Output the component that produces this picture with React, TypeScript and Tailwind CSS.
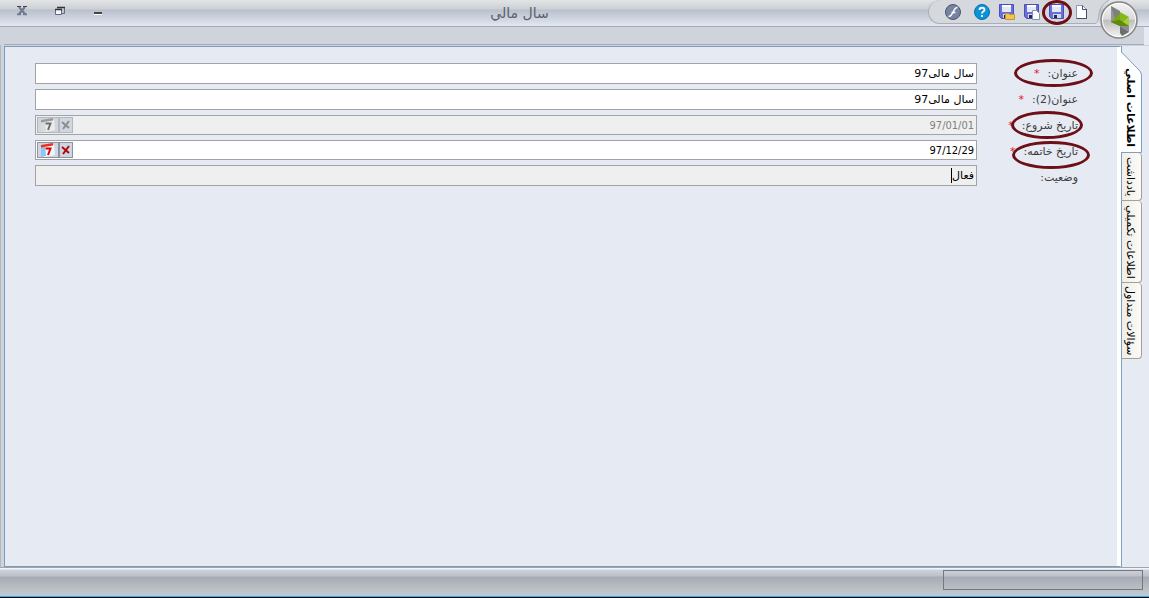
import type { ReactNode } from "react";

type Field = {
    id: string;
    label: string;
    value: string;
    required?: boolean;
    disabled?: boolean;
    readOnly?: boolean;
    picker?: boolean;
    height: string;
    mark?: string;
};

const fields: Field[] = [
    { id: "title", label: "عنوان:", value: "سال مالی97", required: true, height: "h-[21px]", mark: "-right-[15px] -top-[5px] w-[79px]" },
    { id: "title2", label: "عنوان(2):", value: "سال مالی97", required: true, height: "h-[21px]" },
    { id: "start", label: "تاریخ شروع:", value: "97/01/01", required: true, disabled: true, picker: true, height: "h-5", mark: "-right-[5px] -top-[5px] w-[72px]" },
    { id: "end", label: "تاریخ خاتمه:", value: "97/12/29", required: true, picker: true, height: "h-5", mark: "-right-3 -top-px w-[78px]" },
    { id: "status", label: "وضعیت:", value: "فعال", readOnly: true, height: "h-[21px]" },
];

const tabs = [
    { name: "يادداشت", height: "h-12" },
    { name: "اطلاعات تكميلي", height: "h-[82px]" },
    { name: "سؤالات متداول", height: "h-[76px]" },
];

const Floppy = ({ children }: { children?: ReactNode }) => (
    <svg viewBox="0 0 16 16" className="size-4">
        <path d="M.5.500h14v14h-12l-2-2z" fill="#6a6fd8" stroke="#4a4fbc" />
        <path d="M3 1h9v7H3z" fill="#dfe9f8" />
        <path d="M3 1h9v2H3z" fill="#fff" />
        <path d="M4 10h8v4H4z" fill="#d5d8e6" />
        <path d="M5 11h3v3H5z" fill="#23275e" />
        {children}
    </svg>
);

const Calendar = ({ off }: { off?: boolean }) => (
    <svg viewBox="0 0 18 14" className="h-[14px] w-[18px]">
        <path d="M3 3l12-1 1 10-10 2-4-1z" fill={off ? "#ececec" : "#eef7ff"} />
        <path d="M2 4h4l1 9-5 1z" fill={off ? "#dadada" : "#8fc6f3"} />
        <path d="M2 2l12-2v2.500L2 4.500z" fill={off ? "#999" : "#e8301c"} />
        <path d="M6.500 5.500h5l-2.500 6.500" fill="none" stroke={off ? "#6d6d6d" : "#e00000"} strokeWidth="2" />
    </svg>
);

const Cross = ({ off }: { off?: boolean }) => (
    <svg viewBox="0 0 10 10" className="size-[10px]">
        <path d="M1 2l7 6M8 1L2 9" stroke={off ? "#8c8c8c" : "#b00810"} strokeWidth="2" />
    </svg>
);

const Logo = () => (
    <svg viewBox="0 0 40 40" className="size-10">
        <defs>
            <linearGradient id="orb" x1="0" y1="0" x2="0" y2="1">
                <stop offset="0" stopColor="#f4f4f4" />
                <stop offset=".48" stopColor="#dadada" />
                <stop offset=".5" stopColor="#bdbdbd" />
                <stop offset="1" stopColor="#f6f6f6" />
            </linearGradient>
        </defs>
        <circle cx="20" cy="20" r="18" fill="url(#orb)" stroke="#858585" strokeWidth="1.5" />
        <circle cx="20" cy="20" r="16.5" fill="none" stroke="#fafafa" />
        <path d="M12 6l9 5v4l-9 7z" fill="#7d7f80" />
        <path d="M12 6v16l4-3z" fill="#949697" />
        <path d="M12 22l9-9v12z" fill="#7aa80f" />
        <path d="M12 22l9-2v6z" fill="#54790a" />
        <path d="M21 12l9 5-9 8z" fill="#86b81c" />
        <path d="M30 17v9l-9-1z" fill="#a6cf3c" />
        <path d="M12 22l9-2 9 6h-9z" fill="#5f8a0c" />
        <path d="M21 26h9v6z" fill="#8b8d8e" />
        <path d="M21 26l9 6-7 4-2-3z" fill="#6c6e70" />
    </svg>
);

const toolButton = "relative flex size-4 items-center justify-center";

const TitleBar = () => (
    <header dir="ltr" className="relative flex h-[27px] shrink-0 items-center border-b border-[#a6aab4] bg-[linear-gradient(#e2e4e6_0,#cdd0d4_9px,#b9c0cc_10px,#e2e7f1_26px)]">
        <div className="flex gap-5 pl-[13px] pb-1">
            <button aria-label="بستن" className="flex size-[18px] items-center justify-center">
                <svg viewBox="0 0 12 12" className="size-3">
                    <path d="M1 10.500h4M7 10.500h4" stroke="#fff" />
                    <path d="M3 2l6 7M9 2L3 9M1 9.500h4M7 9.500h4" stroke="#6c7a92" strokeWidth="2" />
                    <path d="M1 1.500h4M7 1.500h4" stroke="#444" />
                </svg>
            </button>
            <button aria-label="بازگرداندن" className="flex size-[18px] items-center justify-center">
                <svg viewBox="0 0 10 10" className="size-[10px]">
                    <path d="M2.500 2v-.5h7v6H7" fill="none" stroke="#5f6b80" />
                    <path d="M.5 3.500h6v5h-6z" fill="#f4f6fa" stroke="#5f6b80" />
                    <path d="M0 3.500h7M2 1.500h8" stroke="#333" strokeWidth="1.500" />
                </svg>
            </button>
            <button aria-label="کوچک کردن" className="flex size-[18px] items-center justify-center">
                <svg viewBox="0 0 10 10" className="size-[10px]">
                    <path d="M1 7h8" stroke="#444" strokeWidth="2" />
                    <path d="M1 8.500h8" stroke="#fff" />
                </svg>
            </button>
        </div>
        <h1 dir="rtl" className="absolute inset-x-0 top-1 pr-[110px] text-center text-sm leading-[18px] text-[#5a6070]">سال مالي</h1>
        <div className="absolute right-[54px] top-0 flex h-6 items-center gap-[9px] rounded-l-full border border-x-0 border-t-0 border-l border-[#aaaeb6] bg-[#d5d8dd] pl-4 pr-[5px]">
            <button aria-label="اجرا" className={`${toolButton} mr-1`}>
                <svg viewBox="0 0 16 16" className="size-4">
                    <circle cx="8" cy="8" r="7.500" fill="#7583a0" stroke="#4a566e" />
                    <path d="M12.500 3.500C8 3 8.500 12.500 3.500 12.500M6.500 8.500h4" fill="none" stroke="#fff" strokeWidth="1.600" />
                </svg>
            </button>
            <button aria-label="راهنما" className={toolButton}>
                <svg viewBox="0 0 16 16" className="size-4">
                    <circle cx="8" cy="8" r="7.500" fill="#0a93d6" stroke="#0672ad" />
                    <path d="M5.500 6c0-3 5-3 5 0 0 1.700-2.500 1.500-2.500 3.500M8 11v2" fill="none" stroke="#fff" strokeWidth="1.800" />
                </svg>
            </button>
            <button aria-label="ذخیره و بستن" className={toolButton}>
                <Floppy><path d="M6.500 9.500h3l1 1h5v5h-9z" fill="#f1c550" stroke="#c8952b" /></Floppy>
            </button>
            <button aria-label="ذخیره و جدید" className={toolButton}>
                <Floppy><path d="M8.500 6.500h4l3 3v6h-7z" fill="#fff" stroke="#8294b0" /></Floppy>
            </button>
            <button aria-label="ذخیره" className={toolButton}>
                <Floppy />
                <span className="absolute -inset-x-[7px] -top-1 h-[25px] rounded-[50%] border-3 border-[#6d0f17]" />
            </button>
            <button aria-label="جدید" className={toolButton}>
                <svg viewBox="0 0 16 16" className="size-4">
                    <path d="M2.500 1.500h6l4 4v9h-10z" fill="#fff" stroke="#8b9bb3" />
                    <path d="M8.500 1.500v4h4M12.500 5v9.500h-10" fill="none" stroke="#3f5068" />
                </svg>
            </button>
            <svg viewBox="0 0 16 24" className="absolute left-full top-0 h-6 w-4">
                <path d="M0 0h14q-9 5-10 14-.5 9-4 9.500z" fill="#d5d8dd" />
                <path d="M0 23.500q3.500-.5 4-9.500 1-9 10-14" fill="none" stroke="#aaaeb6" />
            </svg>
        </div>
        <button aria-label="منو" className="absolute right-[10px] top-0 z-10"><Logo /></button>
    </header>
);

const FieldInput = ({ field }: { field: Field }) => {
    const gray = field.disabled || field.readOnly;
    return (
        <div className={`relative flex items-center border border-[#a3a3a3] pr-0.5 ${field.height} ${gray ? "bg-[#efefef]" : "bg-white"}`}>
            <input
                id={field.id}
                defaultValue={field.value}
                disabled={field.disabled}
                readOnly={field.readOnly}
                className={`h-full min-w-0 flex-1 bg-transparent text-right outline-none ${field.disabled ? "text-[#808080]" : "text-black"} ${field.picker ? "font-['DejaVu_Sans_Condensed',sans-serif]" : ""}`}
            />
            {field.readOnly && <span className="absolute right-6 h-[15px] w-px bg-black" />}
            {field.picker && (
                <div className="ml-px flex h-4 shrink-0">
                    <button aria-label="پاک کردن" disabled={field.disabled} className={`flex w-[14px] items-center justify-center border bg-[#d0d6e0] ${field.disabled ? "border-[#b4b8be]" : "border-[#8b93a5]"}`}>
                        <Cross off={field.disabled} />
                    </button>
                    <button aria-label="انتخاب تاریخ" disabled={field.disabled} className={`flex w-[22px] items-center justify-center border bg-[#d0d6e0] ${field.disabled ? "border-[#b4b8be]" : "border-[#8b93a5]"}`}>
                        <Calendar off={field.disabled} />
                    </button>
                </div>
            )}
        </div>
    );
};

const Tabs = () => (
    <nav className="flex w-7 shrink-0 flex-col items-end border-l border-[#7f9fc0] bg-[#e6eaf3] text-black">
        <button className="relative -ml-px flex h-[107px] w-[21px] items-center justify-center pt-4 pr-1 font-bold">
            <svg viewBox="0 0 21 107" className="absolute inset-0 h-[107px] w-[21px]">
                <path d="M0 0v6l17 17q3 3 3 6v77.500H0z" fill="#fff" />
                <path d="M.5 0v6l16.500 17q3.500 3 3.500 6v77.500H0" fill="none" stroke="#7f9fc0" />
            </svg>
            <span className="relative whitespace-nowrap [writing-mode:vertical-rl]">اطلاعات اصلي</span>
        </button>
        {tabs.map((tab) => (
            <button key={tab.name} className={`-ml-px flex w-[21px] items-center justify-center rounded-r-[4px] border border-t-0 border-[#a5a295] border-l-[#7f9fc0] bg-linear-to-r from-[#f0eee6] to-[#fbfaf6] pr-1 ${tab.height}`}>
                <span className="whitespace-nowrap [writing-mode:vertical-rl]">{tab.name}</span>
            </button>
        ))}
    </nav>
);

const App = () => {
    return (
        <div dir="rtl" className="flex h-screen flex-col overflow-hidden bg-[#cfd3dc] font-['DejaVu_Sans',sans-serif] text-[11px]">
            <TitleBar />
            <div className="h-[18px] shrink-0 border-r-[5px] border-[#e6eaf3] pl-1">
                <div className="h-full border-b border-[#a6aab4]" />
            </div>
            <main className="flex min-h-0 flex-1 border-l border-[#b5b8be] pt-px">
                <Tabs />
                <form className="ml-[3px] flex flex-1 border border-[#7b9dbd] border-r-white bg-[#e6eaf3] pt-4 pr-[42px] pl-[30px] shadow-[inset_-3px_0_#fff]">
                    <div className="flex w-[101px] shrink-0 flex-col gap-[6px] pt-px">
                        {fields.map((field) => (
                            <label key={field.id} htmlFor={field.id} className="relative flex h-5 items-center gap-2 whitespace-nowrap text-[#3c3c3c]">
                                {field.label}
                                {field.required && <span className="text-[#e8112d]">*</span>}
                                {field.mark && <span className={`absolute h-7 rounded-[50%] border-3 border-[#6d0f17] ${field.mark}`} />}
                            </label>
                        ))}
                    </div>
                    <div className="flex flex-1 flex-col gap-[5px]">
                        {fields.map((field) => <FieldInput key={field.id} field={field} />)}
                    </div>
                </form>
            </main>
            <footer className="h-[31px] shrink-0 border-t border-[#a0a4ac] border-b border-b-black bg-[linear-gradient(#f4f5f7_0,#f4f5f7_1px,#ccd1da_2px,#bcc1cb_8px,#a6abb5_9px,#c3c6ca_25px,#b5c9e6_26px,#b5c9e6_28px,#27b3d3_28px)] pt-0.5 pr-[6px]">
                <div role="status" className="h-5 w-[200px] border border-[#74777d]" />
            </footer>
        </div>
    );
};

export default App;
